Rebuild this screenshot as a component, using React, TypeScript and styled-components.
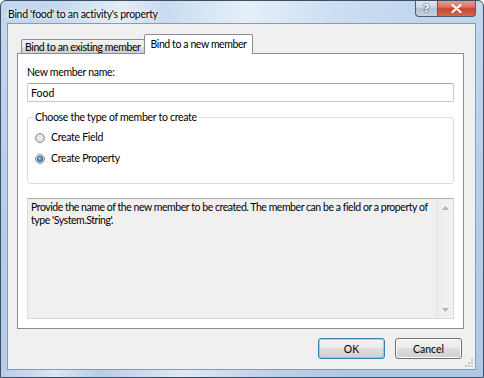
import styled, { createGlobalStyle } from "styled-components";
import { useState } from "react";

const GlobalStyle = createGlobalStyle`
  html, body {
    margin: 0;
    padding: 0;
    background: #ffffff;
  }
  body {
    font-family: "Segoe UI", Lato, "Noto Sans", sans-serif;
    font-size: 10.5px;
    letter-spacing: -0.3px;
    color: #000000;
  }
`;

type MemberKind = "field" | "property";

const App = () => {
  const [name, setName] = useState("Food");
  const [kind, setKind] = useState<MemberKind>("property");

  return (
    <>
      <GlobalStyle />
      <Window>
        <TitleBar>
          <Title>Bind 'food' to an activity's property</Title>
          <CaptionButtons>
            <HelpButton>?</HelpButton>
            <CloseButton>
              <svg width="11" height="9" viewBox="0 0 11 9">
                <path
                  d="M1.5 1 L9.5 8 M9.5 1 L1.5 8"
                  stroke="#ffffff"
                  strokeWidth="2.2"
                  strokeLinecap="round"
                />
              </svg>
            </CloseButton>
          </CaptionButtons>
        </TitleBar>
        <Client>
          <TabStrip>
            <Tab>Bind to an existing member</Tab>
            <Tab $active>Bind to a new member</Tab>
          </TabStrip>
          <TabPanel>
            <FieldLabel>New member name:</FieldLabel>
            <NameInput value={name} onChange={(e) => setName(e.target.value)} />
            <GroupBox>
              <Legend>Choose the type of member to create</Legend>
              <RadioRow onClick={() => setKind("field")}>
                <RadioCircle $checked={kind === "field"} />
                <span>Create Field</span>
              </RadioRow>
              <RadioRow onClick={() => setKind("property")}>
                <RadioCircle $checked={kind === "property"} />
                <span>Create Property</span>
              </RadioRow>
            </GroupBox>
            <DescriptionBox>
              <DescriptionText>
                Provide the name of the new member to be created. The member can
                be a field or a property of type 'System.String'.
              </DescriptionText>
              <ScrollBar>
                <ScrollArrow>
                  <svg width="7" height="4" viewBox="0 0 7 4">
                    <path d="M0 4 L3.5 0 L7 4 Z" fill="#b4b4b4" />
                  </svg>
                </ScrollArrow>
                <ScrollArrow>
                  <svg width="7" height="4" viewBox="0 0 7 4">
                    <path d="M0 0 L3.5 4 L7 0 Z" fill="#b4b4b4" />
                  </svg>
                </ScrollArrow>
              </ScrollBar>
            </DescriptionBox>
          </TabPanel>
          <ButtonRow>
            <DialogButton $default>OK</DialogButton>
            <DialogButton>Cancel</DialogButton>
          </ButtonRow>
          <Grip>
            <svg width="8" height="8" viewBox="0 0 8 8">
              <g fill="#c8c8c8">
                <rect x="6" y="0" width="2" height="2" />
                <rect x="3" y="3" width="2" height="2" />
                <rect x="6" y="3" width="2" height="2" />
                <rect x="0" y="6" width="2" height="2" />
                <rect x="3" y="6" width="2" height="2" />
                <rect x="6" y="6" width="2" height="2" />
              </g>
            </svg>
          </Grip>
        </Client>
      </Window>
    </>
  );
};

const Window = styled.div`
  width: 484px;
  height: 378px;
  box-sizing: border-box;
  display: flex;
  flex-direction: column;
  border: 1px solid #3c4f66;
  border-radius: 6px 6px 0 0;
  background: linear-gradient(
      100deg,
      rgba(255, 255, 255, 0) 10%,
      rgba(255, 255, 255, 0.55) 22%,
      rgba(255, 255, 255, 0.1) 30%,
      rgba(255, 255, 255, 0.6) 45%,
      rgba(255, 255, 255, 0.2) 60%,
      rgba(255, 255, 255, 0) 75%
    ),
    linear-gradient(180deg, #c2d8ef 0%, #b6cfea 50%, #aec8e6 100%);
  overflow: hidden;
`;

const TitleBar = styled.div`
  height: 21px;
  display: flex;
  align-items: flex-start;
  justify-content: space-between;
  padding: 0 7px 0 7px;
`;

const Title = styled.div`
  line-height: 12px;
  padding-top: 7px;
  color: #000000;
  text-shadow: 0 0 6px #ffffff, 0 0 3px #ffffff;
`;

const CaptionButtons = styled.div`
  display: flex;
  margin-top: -1px;
`;

const CaptionButtonBase = styled.div`
  height: 17px;
  box-sizing: border-box;
  display: flex;
  align-items: center;
  justify-content: center;
  border: 1px solid #4f5d6e;
  border-top: none;
`;

const HelpButton = styled(CaptionButtonBase)`
  width: 22px;
  border-radius: 0 0 0 4px;
  border-right: none;
  background: linear-gradient(180deg, #e3e9f0 0%, #cdd6e1 45%, #b3c0cf 55%, #c6d2de 100%);
  color: #ffffff;
  font-family: "DejaVu Sans", sans-serif;
  font-weight: bold;
  font-size: 11px;
  letter-spacing: 0;
  text-shadow: 0 0 1px #33445a, 0 0 2px #33445a;
`;

const CloseButton = styled(CaptionButtonBase)`
  width: 39px;
  border-radius: 0 0 4px 0;
  background: linear-gradient(180deg, #e6a496 0%, #d6725f 45%, #c4462f 55%, #d2694f 100%);
`;

const Client = styled.div`
  position: relative;
  flex: 1;
  margin: 1px 7px 7px 6px;
  border: 1px solid #8a9bb0;
  background: #f0f0f0;
  padding: 11px 11px 0 9px;
  display: flex;
  flex-direction: column;
`;

const TabStrip = styled.div`
  display: flex;
  align-items: flex-end;
  padding-left: 4px;
  height: 19px;
  position: relative;
  z-index: 1;
  margin-bottom: -1px;
`;

const Tab = styled.div<{ $active?: boolean }>`
  box-sizing: border-box;
  height: ${(p) => (p.$active ? "20px" : "15px")};
  padding: ${(p) => (p.$active ? "3px 5px 0 6px" : "1px 3px 0 3px")};
  margin-left: ${(p) => (p.$active ? "-1px" : "0")};
  border: 1px solid #898c95;
  border-bottom: ${(p) => (p.$active ? "none" : "1px solid #898c95")};
  border-radius: 2px 2px 0 0;
  background: ${(p) =>
    p.$active
      ? "#ffffff"
      : "linear-gradient(180deg, #f2f2f2 0%, #ebebeb 50%, #dddddd 51%, #cfcfcf 100%)"};
  line-height: 12px;
  letter-spacing: -0.4px;
  white-space: nowrap;
`;

const TabPanel = styled.div`
  height: 276px;
  box-sizing: border-box;
  border: 1px solid #898c95;
  background: #ffffff;
  padding: 12px 9px 0 9px;
  display: flex;
  flex-direction: column;
`;

const FieldLabel = styled.div`
  line-height: 13px;
  margin-bottom: 4px;
`;

const NameInput = styled.input`
  height: 19px;
  box-sizing: border-box;
  border: 1px solid #b9cde2;
  border-top-color: #8fb1d3;
  border-radius: 2px;
  padding: 0 3px;
  font: inherit;
  outline: none;
  margin: 0;
`;

const GroupBox = styled.fieldset`
  margin: 9px 0 0 0;
  height: 73px;
  box-sizing: border-box;
  border: 1px solid #d5dfe5;
  border-radius: 3px;
  padding: 8px 0 0 7px;
  display: flex;
  flex-direction: column;
  gap: 8px;
`;

const Legend = styled.legend`
  padding: 0 2px 0 1px;
  margin-left: -1px;
  line-height: 12px;
`;

const RadioRow = styled.label`
  display: flex;
  align-items: center;
  gap: 6px;
  line-height: 13px;
  cursor: default;
`;

const RadioCircle = styled.span<{ $checked: boolean }>`
  width: 10px;
  height: 10px;
  box-sizing: border-box;
  border-radius: 50%;
  border: 1px solid #8e8f8f;
  background: radial-gradient(circle at 50% 50%, #f4f4f4 0%, #dcdcdc 60%, #eeeeee 100%);
  display: flex;
  align-items: center;
  justify-content: center;

  &::after {
    content: "";
    display: ${(p) => (p.$checked ? "block" : "none")};
    width: 4px;
    height: 4px;
    border-radius: 50%;
    background: radial-gradient(circle at 40% 35%, #a9e3fb 0%, #2b8cc4 55%, #0d4f86 100%);
    box-shadow: 0 0 0 1px #1f5d8c;
  }
`;

const DescriptionBox = styled.div`
  margin-top: 14px;
  height: 121px;
  box-sizing: border-box;
  border: 1px solid #dadada;
  border-top-color: #abadb3;
  background: #f0f0f0;
  display: flex;
`;

const DescriptionText = styled.div`
  flex: 1;
  padding: 2px 0 0 3px;
  line-height: 13px;
  letter-spacing: -0.45px;
`;

const ScrollBar = styled.div`
  width: 16px;
  border-left: 1px solid #e4e4e4;
  background: linear-gradient(90deg, #ececec, #f3f3f3);
  display: flex;
  flex-direction: column;
  justify-content: space-between;
  padding: 6px 0 5px 0;
`;

const ScrollArrow = styled.div`
  display: flex;
  justify-content: center;
  height: 6px;
  align-items: center;
`;

const ButtonRow = styled.div`
  display: flex;
  justify-content: flex-end;
  gap: 10px;
  margin-top: 9px;
  margin-right: 2px;
`;

const DialogButton = styled.button<{ $default?: boolean }>`
  width: 67px;
  height: 21px;
  box-sizing: border-box;
  font: inherit;
  padding: 0;
  border-radius: 3px;
  border: 1px solid ${(p) => (p.$default ? "#3c7fb1" : "#707070")};
  background: linear-gradient(180deg, #f2f2f2 0%, #ebebeb 48%, #dddddd 50%, #cfcfcf 100%);
  box-shadow: ${(p) =>
    p.$default ? "inset 0 0 0 1px #48d6f8aa" : "inset 0 0 0 1px #fcfcfc"};
  color: #000000;
`;

const Grip = styled.div`
  position: absolute;
  right: 2px;
  bottom: 2px;
  display: flex;
`;

export default App;
